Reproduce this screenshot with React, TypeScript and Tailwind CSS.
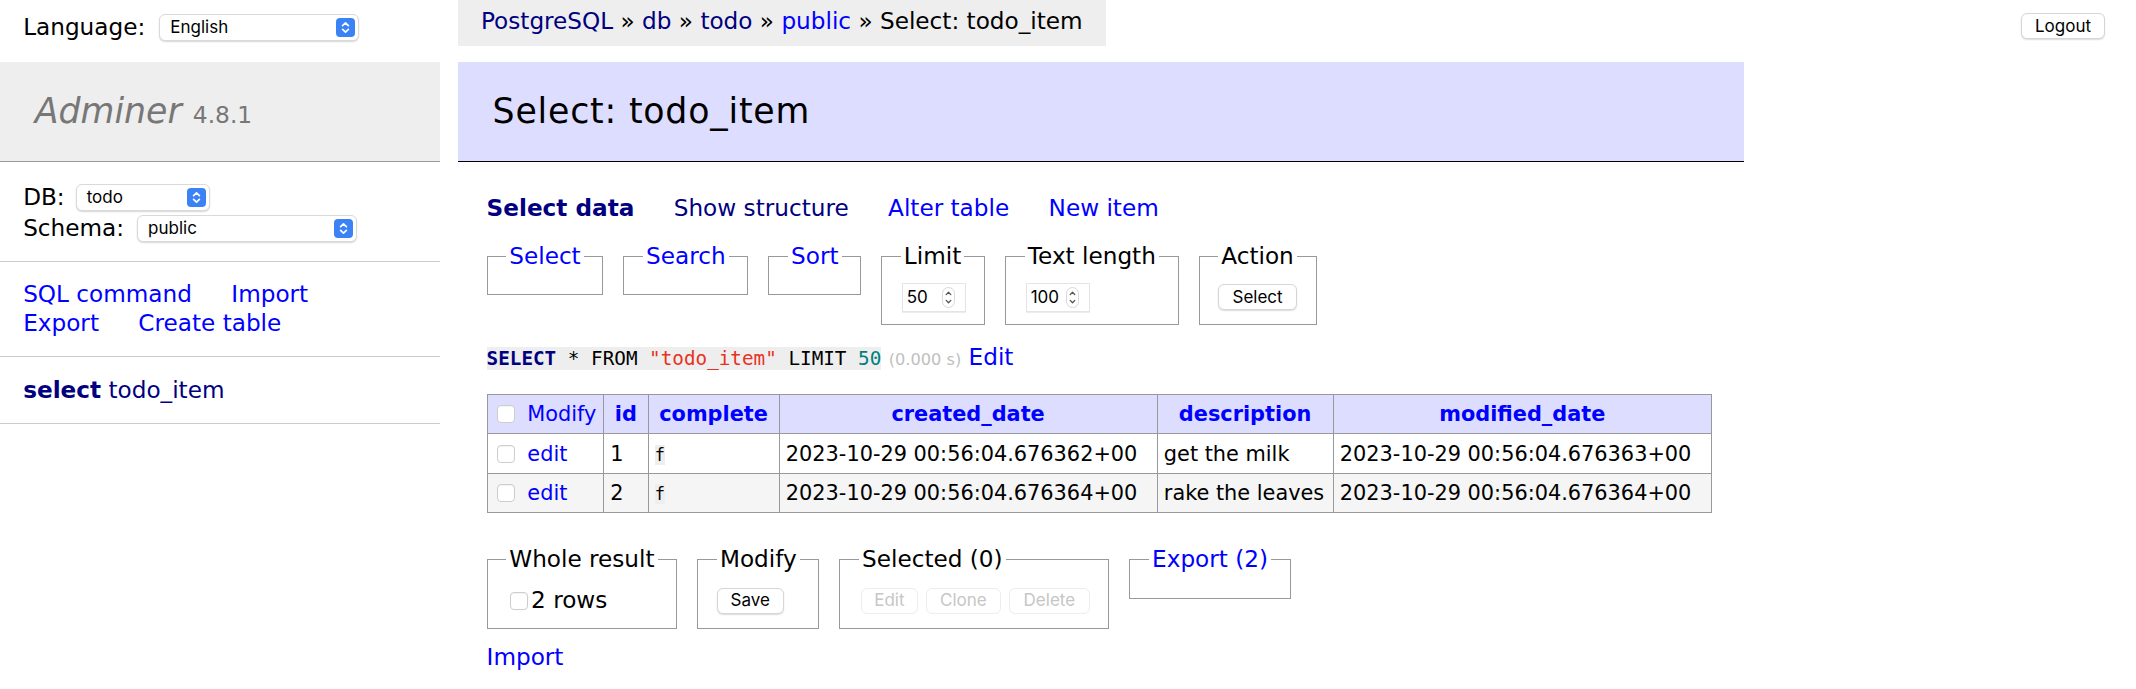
import React from "react";

const SYS = "font-['Inter','Liberation_Sans',sans-serif]";
const MONO = "font-['DejaVu_Sans_Mono','Liberation_Mono',monospace]";

function Arrows() {
  return (
    <svg width="19" height="19" viewBox="0 0 19 19">
      <path
        d="M6.6 7.6 L9.5 4.8 L12.4 7.6 M6.6 11.4 L9.5 14.2 L12.4 11.4"
        stroke="white"
        strokeWidth="1.7"
        fill="none"
        strokeLinecap="round"
        strokeLinejoin="round"
      />
    </svg>
  );
}

function SelectBox({ value, w }: { value: string; w: string }) {
  return (
    <div
      className={`inline-flex items-center justify-between ${w} h-[27px] rounded-[6px] bg-white border border-[#dadada] shadow-[0_1px_1.5px_rgba(0,0,0,0.16)] pl-[10px] pr-[3px] text-[17px] leading-none text-black ${SYS}`}
    >
      <span>{value}</span>
      <span className="flex items-center justify-center w-[19px] h-[19px] rounded-[4px] bg-[#3b82f7]">
        <Arrows />
      </span>
    </div>
  );
}

function Btn({ children, w, disabled }: { children: React.ReactNode; w: string; disabled?: boolean }) {
  return (
    <span
      className={`inline-flex items-center justify-center h-[26px] ${w} rounded-[6px] bg-white border text-[17px] leading-none ${SYS} ${
        disabled
          ? "border-[#ededed] text-[#c6c6c6]"
          : "border-[#d6d6d6] text-black shadow-[0_1px_1.5px_rgba(0,0,0,0.14)]"
      }`}
    >
      {children}
    </span>
  );
}

function Check({ cls }: { cls: string }) {
  return (
    <span
      className={`inline-block shrink-0 w-[18px] h-[18px] rounded-[4px] bg-white border border-[#cdcdcd] shadow-[inset_0_1px_1px_rgba(0,0,0,0.05)] ${cls}`}
    />
  );
}

function NumInput({ value }: { value: string }) {
  return (
    <div
      className={`flex items-center w-[64px] h-[29px] bg-white border border-[#e4e4e4] shadow-[0_1px_0_rgba(0,0,0,0.07)] pl-[4px] pr-[10px] text-[17px] leading-none text-black ${SYS}`}
    >
      <span className="flex-1">{value}</span>
      <span className="flex items-center justify-center w-[13px] h-[21px] rounded-[7px] border border-[#d8d8d8] bg-white">
        <svg width="11" height="19" viewBox="0 0 11 19">
          <path
            d="M3.2 6.6 L5.5 4.2 L7.8 6.6 M3.2 12.4 L5.5 14.8 L7.8 12.4"
            stroke="#555"
            strokeWidth="1.3"
            fill="none"
            strokeLinecap="round"
            strokeLinejoin="round"
          />
        </svg>
      </span>
    </div>
  );
}

function FS({ legend, link, children }: { legend: string; link?: boolean; children?: React.ReactNode }) {
  return (
    <fieldset className="border border-[#999] px-[18.5px] py-[11.6px] min-w-0">
      <legend className={`px-[3.2px] leading-[28.96px] ${link ? "text-[#0000ff]" : "text-black"}`}>{legend}</legend>
      {children}
    </fieldset>
  );
}

const TD = "border border-[#999] px-[6.26px] py-[4.17px] whitespace-nowrap text-left";
const TH = "border border-[#999] px-[10.4px] py-[4.17px] whitespace-nowrap text-center font-bold text-[#0000ff] bg-[#ddf]";

function Row({ id, created, desc, modified, odd }: { id: string; created: string; desc: string; modified: string; odd?: boolean }) {
  const bg = odd ? "bg-[#f5f5f5]" : "bg-white";
  return (
    <tr className="h-[39.5px]">
      <td className={`${TD} ${bg}`}>
        <div className="flex items-center">
          <Check cls="ml-[3.5px] mr-[12px]" />
          <a className="text-[#0000ff]">edit</a>
        </div>
      </td>
      <td className={`${TD} ${bg}`}>{id}</td>
      <td className={`${TD} ${bg}`}>
        <code className={`bg-[#eee] text-[16.9px] ${MONO}`}>f</code>
      </td>
      <td className={`${TD} ${bg}`}>{created}</td>
      <td className={`${TD} ${bg}`}>{desc}</td>
      <td className={`${TD} ${bg}`}>{modified}</td>
    </tr>
  );
}

export default function App() {
  return (
    <div className="flex items-start min-h-[689px] bg-white text-black font-['DejaVu_Sans',Verdana,sans-serif] text-[23.17px] leading-[1.25]">
      {/* Sidebar */}
      <div className="w-[440.2px] shrink-0">
        <div className="flex items-center h-[41.7px] mt-[6.95px] px-[23.17px] gap-[14px]">
          <span>Language:</span>
          <SelectBox value="English" w="w-[200px]" />
        </div>
        <div className="mt-[13.4px]">
          <h1 className="bg-[#eee] border-b border-[#999] px-[34.76px] py-[27.8px] text-[34.76px] leading-[1.25] text-[#777] font-normal whitespace-nowrap">
            <span className="italic">Adminer</span> <span className="text-[23.3px]">4.8.1</span>
          </h1>
          <div className="px-[23.17px] pt-[19.5px] pb-[17px] border-b border-[#ccc]">
            <div className="flex items-center h-[31px] gap-[11px]">
              <span>DB:</span>
              <SelectBox value="todo" w="w-[134px]" />
            </div>
            <div className="flex items-center h-[31px] gap-[13px]">
              <span>Schema:</span>
              <SelectBox value="public" w="w-[220px]" />
            </div>
          </div>
          <div className="px-[23.17px] py-[18.5px] border-b border-[#ccc] text-[#0000ff] whitespace-nowrap">
            <div>
              <a className="mr-[32px]">SQL command</a> <a>Import</a>
            </div>
            <div>
              <a className="mr-[32px]">Export</a> <a>Create table</a>
            </div>
          </div>
          <div className="px-[23.17px] py-[18.5px] border-b border-[#ccc] text-[#000080] whitespace-nowrap">
            <a className="font-bold">select</a> <a>todo_item</a>
          </div>
        </div>
      </div>

      {/* Main */}
      <div className="ml-[17.6px] shrink-0 pr-[32px] flex flex-col">
        <div className="self-start h-[46.3px] leading-[41.7px] px-[23.17px] bg-[#eee] whitespace-nowrap">
          <a className="text-[#000080]">PostgreSQL</a> » <a className="text-[#000080]">db</a> »{" "}
          <a className="text-[#000080]">todo</a> » <a className="text-[#0000ff]">public</a> » Select: todo_item
        </div>
        <div className="pt-[16px]">
          <h2 className="bg-[#ddf] border-b border-black px-[34.76px] py-[27.8px] text-[34.76px] leading-[1.25] tracking-[0.8px] font-normal mb-[32px] whitespace-nowrap">
            Select: todo_item
          </h2>
          <div className="pl-[28.8px] pr-[32px]">
            <div className="leading-[28.96px] whitespace-nowrap">
              <a className="font-bold text-[#000080] mr-[32px]">Select data</a>{" "}
              <a className="text-[#000080] mr-[32px]">Show structure</a>{" "}
              <a className="text-[#0000ff] mr-[32px]">Alter table</a>{" "}
              <a className="text-[#0000ff] mr-[32px]">New item</a>
            </div>

            <div className="flex items-start gap-[20px] mt-[18.5px]">
              <FS legend="Select" link />
              <FS legend="Search" link />
              <FS legend="Sort" link />
              <FS legend="Limit">
                <div className="flex items-center h-[30px] pl-[1px]">
                  <NumInput value="50" />
                </div>
              </FS>
              <FS legend="Text length">
                <div className="flex items-center h-[30px] pl-[1px]">
                  <NumInput value="100" />
                </div>
              </FS>
              <FS legend="Action">
                <div className="flex items-center h-[30px]">
                  <Btn w="w-[79px]">Select</Btn>
                </div>
              </FS>
            </div>

            <div className="mt-[18.5px] leading-[28.96px] whitespace-nowrap">
              <code className={`bg-[#eee] text-[19.3px] ${MONO}`}>
                <span className="font-bold text-[#000080]">SELECT</span> * FROM{" "}
                <span className="text-[#e8321e]">"todo_item"</span> LIMIT{" "}
                <span className="text-[#007f7f]">50</span>
              </code>{" "}
              <span className="text-[16.2px] text-[#c0c0c0]">(0.000 s)</span>{" "}
              <a className="text-[#0000ff]">Edit</a>
            </div>

            <table className="mt-[19px] border-collapse table-fixed w-[1224.4px] text-[20.85px] leading-[1.25]">
              <colgroup>
                <col className="w-[116.5px]" />
                <col className="w-[44.5px]" />
                <col className="w-[131px]" />
                <col className="w-[378px]" />
                <col className="w-[176px]" />
                <col className="w-[378.4px]" />
              </colgroup>
              <thead>
                <tr className="h-[39px]">
                  <td className={`${TD} bg-[#ddf]`}>
                    <div className="flex items-center">
                      <Check cls="ml-[3.5px] mr-[12px]" />
                      <a className="text-[#0000ff]">Modify</a>
                    </div>
                  </td>
                  <th className={TH}>id</th>
                  <th className={TH}>complete</th>
                  <th className={TH}>created_date</th>
                  <th className={TH}>description</th>
                  <th className={TH}>modified_date</th>
                </tr>
              </thead>
              <tbody>
                <Row
                  id="1"
                  created="2023-10-29 00:56:04.676362+00"
                  desc="get the milk"
                  modified="2023-10-29 00:56:04.676363+00"
                />
                <Row
                  id="2"
                  created="2023-10-29 00:56:04.676364+00"
                  desc="rake the leaves"
                  modified="2023-10-29 00:56:04.676364+00"
                  odd
                />
              </tbody>
            </table>

            <div className="flex items-start gap-[20px] mt-[32px]">
              <FS legend="Whole result">
                <div className="flex items-center h-[30px] whitespace-nowrap">
                  <Check cls="ml-[4px] mr-[3px]" />
                  <span>2 rows</span>
                </div>
              </FS>
              <FS legend="Modify">
                <div className="flex items-center h-[30px]">
                  <Btn w="w-[67px]">Save</Btn>
                </div>
              </FS>
              <FS legend="Selected (0)">
                <div className="flex items-center h-[30px] gap-[8px] pl-[2px]">
                  <Btn w="w-[57px]" disabled>
                    Edit
                  </Btn>
                  <Btn w="w-[75px]" disabled>
                    Clone
                  </Btn>
                  <Btn w="w-[81px]" disabled>
                    Delete
                  </Btn>
                </div>
              </FS>
              <FS legend="Export (2)" link />
            </div>
            <div className="pt-[14.5px] pb-[20px] text-[#0000ff]">
              <a>Import</a>
            </div>
          </div>
        </div>
      </div>

      {/* Logout */}
      <div className="flex-1 flex justify-end pt-[13px] pr-[31px]">
        <Btn w="w-[84px]">Logout</Btn>
      </div>
    </div>
  );
}
